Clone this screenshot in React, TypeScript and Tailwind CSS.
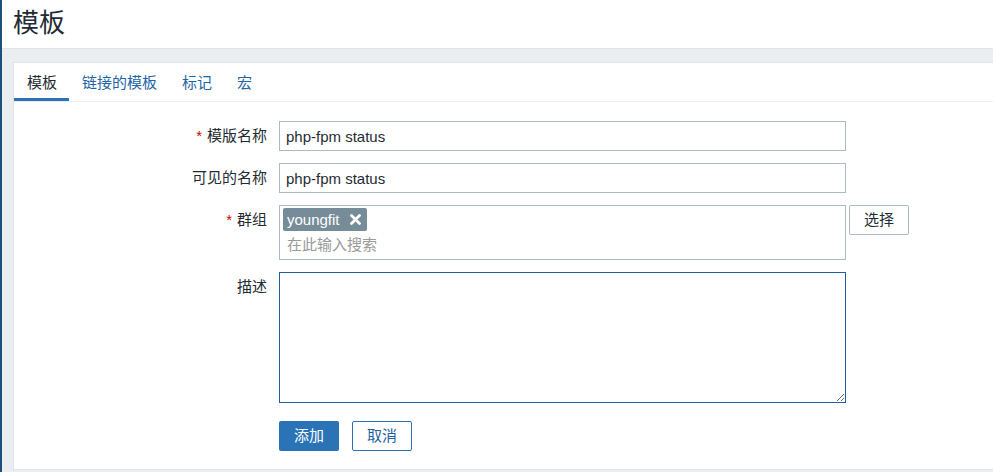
import React, { useState } from 'react';

const FONT = '"Liberation Sans", Arial, "Noto Sans CJK SC", sans-serif';

const tabs = ['模板', '链接的模板', '标记', '宏'];

const FormRow = ({ label, required, children }: { label: string, required?: boolean, children: React.ReactNode }) => (
  <div className="flex items-start">
    <label className="w-[253px] shrink-0 text-right pt-[5px] leading-[20px] text-[#1f2c33]">
      {required && <span className="text-[#d40000] mr-[5px]">*</span>}
      {label}
    </label>
    <div className="ml-[12px] flex items-start">{children}</div>
  </div>
);

const App = () => {
  const [activeTab] = useState(0);
  const [name, setName] = useState('php-fpm status');
  const [visibleName, setVisibleName] = useState('php-fpm status');

  return (
    <div className="flex min-h-screen bg-[#ebeef0] text-[15px]" style={{ fontFamily: FONT }}>
      <div className="w-[2px] shrink-0 bg-[#1d4f7c]" />
      <div className="flex-1 flex flex-col min-w-0">
        <header className="h-[49px] bg-white border-b border-[#dfe4e7] pl-[11px] flex items-center pb-[3px]">
          <h1 className="text-[26px] leading-none text-[#1f2c33]">模板</h1>
        </header>
        <div className="pt-[13px] pl-[11px]">
          <div className="bg-white border border-r-0 border-[#dfe4e7] pb-[18px]">
            <ul className="flex border-b border-[#ebeef0] h-[39px]">
              {tabs.map((t, i) => (
                <li
                  key={t}
                  className={`relative pl-[13px] pr-[12px] flex items-center leading-none ${i === activeTab ? 'text-[#1f2c33]' : 'text-[#1f65a6]'}`}
                >
                  {t}
                  {i === activeTab && <span className="absolute left-0 right-0 bottom-0 h-[3px] bg-[#2a73b7]" />}
                </li>
              ))}
            </ul>

            <form className="pt-[19px] flex flex-col gap-[12px]" onSubmit={e => e.preventDefault()}>
              <FormRow label="模版名称" required>
                <input
                  value={name}
                  onChange={e => setName(e.target.value)}
                  className="w-[567px] h-[30px] border border-[#acbbc2] pl-[6px] text-[#1f2c33] outline-none"
                />
              </FormRow>
              <FormRow label="可见的名称">
                <input
                  value={visibleName}
                  onChange={e => setVisibleName(e.target.value)}
                  className="w-[567px] h-[30px] border border-[#acbbc2] pl-[6px] text-[#1f2c33] outline-none"
                />
              </FormRow>
              <FormRow label="群组" required>
                <div className="w-[567px] h-[55px] border border-[#acbbc2] pt-[2px] pl-[3px]">
                  <span className="inline-flex items-center h-[23px] bg-[#768d99] rounded-[2px] text-white pl-[4px] pr-[6px] leading-none">
                    youngfit
                    <svg width="11" height="11" viewBox="0 0 11 11" className="ml-[10px]">
                      <path d="M1.5 1.5 L9.5 9.5 M9.5 1.5 L1.5 9.5" stroke="white" strokeWidth="2.8" strokeLinecap="round" />
                    </svg>
                  </span>
                  <input
                    placeholder="在此输入搜索"
                    className="block w-full h-[26px] pl-[4px] outline-none placeholder:text-[#9a9a9a]"
                  />
                </div>
                <button type="button" className="ml-[3px] w-[60px] h-[30px] border border-[#acbbc2] rounded-[2px] bg-white text-[#1f2c33]">
                  选择
                </button>
              </FormRow>
              <FormRow label="描述">
                <textarea className="block w-[567px] h-[131px] border border-[#1f5f9f] outline-none" />
              </FormRow>
              <div className="flex gap-[13px] pl-[265px] mt-[6px]">
                <button type="submit" className="w-[60px] h-[30px] rounded-[2px] bg-[#2a73b7] text-white">添加</button>
                <button type="button" className="w-[60px] h-[30px] rounded-[2px] border border-[#2a73b7] bg-white text-[#1f5f9f]">取消</button>
              </div>
            </form>
          </div>
        </div>
      </div>
    </div>
  );
};

export default App;
